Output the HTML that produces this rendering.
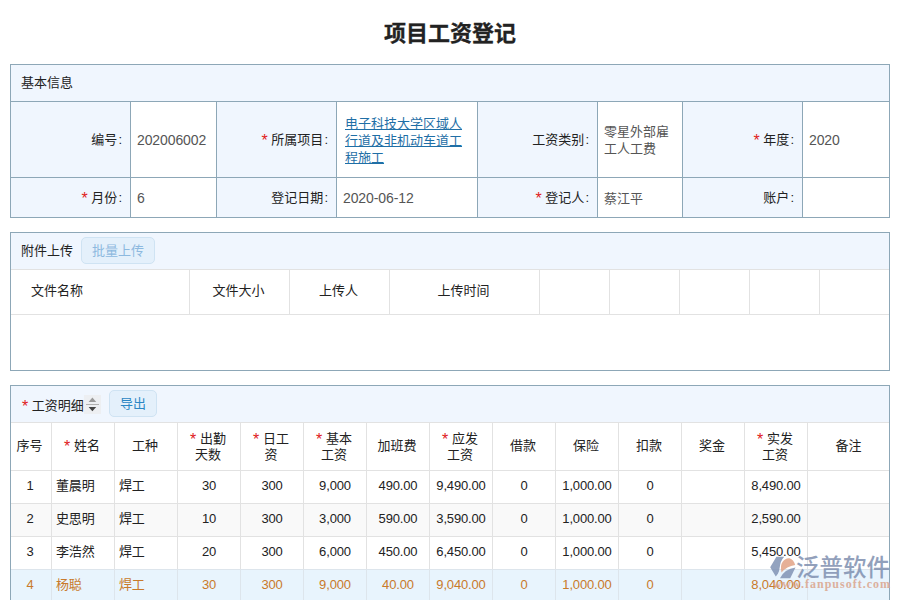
<!DOCTYPE html>
<html lang="zh-CN">
<head>
<meta charset="utf-8">
<title>项目工资登记</title>
<style>
*{box-sizing:border-box;margin:0;padding:0}
html,body{width:900px;height:600px;overflow:hidden;background:#fff}
body{font-family:"Liberation Sans","Noto Sans CJK SC",sans-serif;font-size:13px;color:#333;position:relative}
h1{position:absolute;left:0;top:15.5px;width:900px;text-align:center;font-size:22px;line-height:36px;font-weight:bold;color:#222;-webkit-text-stroke:.3px #222}
.panel{position:absolute;left:10px;width:880px;border:1px solid #8da7b7;background:#fff;overflow:hidden}
.ph{position:absolute;left:0;top:0;width:100%;height:37px;background:#f0f6fe;line-height:36px;padding-left:10px;color:#222}
.req{color:#e02020;font-family:"Liberation Sans",sans-serif;font-size:16px;line-height:10px;vertical-align:-2px}
.c{font-style:normal;margin-left:1px}
.cell{position:absolute;border-left:1px solid #8da7b7;border-top:1px solid #8da7b7;display:flex;align-items:center}
.lab{background:#f0f6fe;justify-content:flex-end;padding:0 8px 3px 0;color:#222}
.val{background:#fff;padding:0 8px 0 6px;color:#555;font-size:14px;letter-spacing:-.1px}
.val.cn{letter-spacing:0;font-size:13px;line-height:17px}
a.lk{margin-left:2px;display:block;white-space:nowrap;color:#1f6fa6;text-decoration:underline;letter-spacing:0;line-height:17px}
.gc{position:absolute;border-left:1px solid #e2e2e2;border-top:1px solid #e2e2e2;display:flex;align-items:center;justify-content:center;text-align:center;line-height:16px;color:#222}
.gc.l{justify-content:flex-start;padding-left:4px;text-align:left}
.gc.d{padding-bottom:3px;letter-spacing:-.15px}
.gc.h1{padding-bottom:2px;padding-right:2px}
.gc.h2{padding-right:2px}
.alt{background:#f9f9f9}
.sel{background:#e8f4fd;color:#c97a2b;border-color:#dde5ec}
.wm{position:absolute;left:0;top:0;width:900px;height:600px;opacity:.85;pointer-events:none}
.wt{position:absolute;left:796px;top:552.5px;font-size:23.5px;font-weight:500;line-height:30px;color:#7f90b0;white-space:nowrap}
.wu{position:absolute;right:9px;top:577px;font-family:"Liberation Serif",serif;font-weight:bold;font-size:12px;line-height:14px;letter-spacing:1px;color:#dba58d;white-space:nowrap}
.btn{position:absolute;border:1px solid #cfe3f3;background:#e4f0fb;border-radius:5px;text-align:center;color:#2b86c4;line-height:25px;height:27px}
</style>
</head>
<body>
<h1>项目工资登记</h1>
<div class="panel" style="top:64px;height:154px">
<div class="ph">基本信息</div>
<div class="cell lab" style="left:-1px;top:36px;width:120px;height:77px"><span>编号<i class="c">:</i></span></div>
<div class="cell val " style="left:119px;top:36px;width:86px;height:77px">202006002</div>
<div class="cell lab" style="left:205px;top:36px;width:120px;height:77px"><span><span class="req">*</span> 所属项目<i class="c">:</i></span></div>
<div class="cell val cn" style="left:325px;top:36px;width:141px;height:77px"><a class="lk">电子科技大学区域人<br>行道及非机动车道工<br>程施工</a></div>
<div class="cell lab" style="left:466px;top:36px;width:120px;height:77px"><span>工资类别<i class="c">:</i></span></div>
<div class="cell val cn" style="left:586px;top:36px;width:85px;height:77px"><span style="white-space:nowrap">零星外部雇<br>工人工费</span></div>
<div class="cell lab" style="left:671px;top:36px;width:120px;height:77px"><span><span class="req">*</span> 年度<i class="c">:</i></span></div>
<div class="cell val " style="left:791px;top:36px;width:87px;height:77px">2020</div>
<div class="cell lab" style="left:-1px;top:112px;width:120px;height:41px"><span><span class="req">*</span> 月份<i class="c">:</i></span></div>
<div class="cell val " style="left:119px;top:112px;width:86px;height:41px">6</div>
<div class="cell lab" style="left:205px;top:112px;width:120px;height:41px"><span>登记日期<i class="c">:</i></span></div>
<div class="cell val " style="left:325px;top:112px;width:141px;height:41px">2020-06-12</div>
<div class="cell lab" style="left:466px;top:112px;width:120px;height:41px"><span><span class="req">*</span> 登记人<i class="c">:</i></span></div>
<div class="cell val cn" style="left:586px;top:112px;width:85px;height:41px">蔡江平</div>
<div class="cell lab" style="left:671px;top:112px;width:120px;height:41px"><span>账户<i class="c">:</i></span></div>
<div class="cell val " style="left:791px;top:112px;width:87px;height:41px"></div>
</div>
<div class="panel" style="top:232px;height:139px">
<div class="ph">附件上传</div>
<div class="btn" style="left:70px;top:4px;width:74px;color:#8db9df">批量上传</div>
<div class="gc l" style="left:-1px;top:36px;width:179px;height:46px;border-bottom:1px solid #e2e2e2;padding-bottom:2px;padding-left:20px">文件名称</div>
<div class="gc" style="left:178px;top:36px;width:100px;height:46px;border-bottom:1px solid #e2e2e2;padding-bottom:2px;padding-right:2px">文件大小</div>
<div class="gc" style="left:278px;top:36px;width:100px;height:46px;border-bottom:1px solid #e2e2e2;padding-bottom:2px;padding-right:2px">上传人</div>
<div class="gc" style="left:378px;top:36px;width:150px;height:46px;border-bottom:1px solid #e2e2e2;padding-bottom:2px;padding-right:2px">上传时间</div>
<div class="gc" style="left:528px;top:36px;width:70px;height:46px;border-bottom:1px solid #e2e2e2;padding-bottom:2px;padding-right:2px"></div>
<div class="gc" style="left:598px;top:36px;width:70px;height:46px;border-bottom:1px solid #e2e2e2;padding-bottom:2px;padding-right:2px"></div>
<div class="gc" style="left:668px;top:36px;width:70px;height:46px;border-bottom:1px solid #e2e2e2;padding-bottom:2px;padding-right:2px"></div>
<div class="gc" style="left:738px;top:36px;width:70px;height:46px;border-bottom:1px solid #e2e2e2;padding-bottom:2px;padding-right:2px"></div>
<div class="gc" style="left:808px;top:36px;width:70px;height:46px;border-bottom:1px solid #e2e2e2;padding-bottom:2px;padding-right:2px"></div>
</div>
<div class="panel" style="top:385px;height:230px">
<div class="ph" style="padding-left:11px;line-height:39px"><span class="req">*</span> 工资明细</div>
<svg style="position:absolute;left:73px;top:9px" width="17" height="19" viewBox="0 0 17 19"><rect width="17" height="19" fill="#edeff2"/><path d="M8.4 2.6 L12.2 7 H4.6 Z" fill="#9a9a9a"/><rect x="2" y="9" width="13" height="1" fill="#b0b0b0"/><path d="M4.6 12 H12.2 L8.4 16.2 Z" fill="#444"/></svg>
<div class="btn" style="left:98px;top:4px;width:48px">导出</div>
<div class="gc h1" style="left:-1px;top:36px;width:41px;height:49px;padding-right:3px">序号</div>
<div class="gc h1" style="left:40px;top:36px;width:63px;height:49px"><span><span class="req">*</span> 姓名</span></div>
<div class="gc h1" style="left:103px;top:36px;width:63px;height:49px">工种</div>
<div class="gc h2" style="left:166px;top:36px;width:63px;height:49px"><span><span class="req">*</span> 出勤<br>天数</span></div>
<div class="gc h2" style="left:229px;top:36px;width:63px;height:49px"><span><span class="req">*</span> 日工<br>资</span></div>
<div class="gc h2" style="left:292px;top:36px;width:63px;height:49px"><span><span class="req">*</span> 基本<br>工资</span></div>
<div class="gc h1" style="left:355px;top:36px;width:63px;height:49px">加班费</div>
<div class="gc h2" style="left:418px;top:36px;width:63px;height:49px"><span><span class="req">*</span> 应发<br>工资</span></div>
<div class="gc h1" style="left:481px;top:36px;width:63px;height:49px">借款</div>
<div class="gc h1" style="left:544px;top:36px;width:63px;height:49px">保险</div>
<div class="gc h1" style="left:607px;top:36px;width:63px;height:49px">扣款</div>
<div class="gc h1" style="left:670px;top:36px;width:63px;height:49px">奖金</div>
<div class="gc h2" style="left:733px;top:36px;width:63px;height:49px"><span><span class="req">*</span> 实发<br>工资</span></div>
<div class="gc h1" style="left:796px;top:36px;width:82px;height:49px;padding-right:0">备注</div>
<div class="gc d" style="left:-1px;top:84px;width:41px;height:34px;padding-right:2px">1</div>
<div class="gc d l" style="left:40px;top:84px;width:63px;height:34px">董晨明</div>
<div class="gc d l" style="left:103px;top:84px;width:63px;height:34px">焊工</div>
<div class="gc d" style="left:166px;top:84px;width:63px;height:34px">30</div>
<div class="gc d" style="left:229px;top:84px;width:63px;height:34px">300</div>
<div class="gc d" style="left:292px;top:84px;width:63px;height:34px">9,000</div>
<div class="gc d" style="left:355px;top:84px;width:63px;height:34px">490.00</div>
<div class="gc d" style="left:418px;top:84px;width:63px;height:34px">9,490.00</div>
<div class="gc d" style="left:481px;top:84px;width:63px;height:34px">0</div>
<div class="gc d" style="left:544px;top:84px;width:63px;height:34px">1,000.00</div>
<div class="gc d" style="left:607px;top:84px;width:63px;height:34px">0</div>
<div class="gc d" style="left:670px;top:84px;width:63px;height:34px"></div>
<div class="gc d" style="left:733px;top:84px;width:63px;height:34px">8,490.00</div>
<div class="gc d" style="left:796px;top:84px;width:82px;height:34px"></div>
<div class="gc d alt" style="left:-1px;top:117px;width:41px;height:34px;padding-right:2px">2</div>
<div class="gc d l alt" style="left:40px;top:117px;width:63px;height:34px">史思明</div>
<div class="gc d l alt" style="left:103px;top:117px;width:63px;height:34px">焊工</div>
<div class="gc d alt" style="left:166px;top:117px;width:63px;height:34px">10</div>
<div class="gc d alt" style="left:229px;top:117px;width:63px;height:34px">300</div>
<div class="gc d alt" style="left:292px;top:117px;width:63px;height:34px">3,000</div>
<div class="gc d alt" style="left:355px;top:117px;width:63px;height:34px">590.00</div>
<div class="gc d alt" style="left:418px;top:117px;width:63px;height:34px">3,590.00</div>
<div class="gc d alt" style="left:481px;top:117px;width:63px;height:34px">0</div>
<div class="gc d alt" style="left:544px;top:117px;width:63px;height:34px">1,000.00</div>
<div class="gc d alt" style="left:607px;top:117px;width:63px;height:34px">0</div>
<div class="gc d alt" style="left:670px;top:117px;width:63px;height:34px"></div>
<div class="gc d alt" style="left:733px;top:117px;width:63px;height:34px">2,590.00</div>
<div class="gc d alt" style="left:796px;top:117px;width:82px;height:34px"></div>
<div class="gc d" style="left:-1px;top:150px;width:41px;height:34px;padding-right:2px">3</div>
<div class="gc d l" style="left:40px;top:150px;width:63px;height:34px">李浩然</div>
<div class="gc d l" style="left:103px;top:150px;width:63px;height:34px">焊工</div>
<div class="gc d" style="left:166px;top:150px;width:63px;height:34px">20</div>
<div class="gc d" style="left:229px;top:150px;width:63px;height:34px">300</div>
<div class="gc d" style="left:292px;top:150px;width:63px;height:34px">6,000</div>
<div class="gc d" style="left:355px;top:150px;width:63px;height:34px">450.00</div>
<div class="gc d" style="left:418px;top:150px;width:63px;height:34px">6,450.00</div>
<div class="gc d" style="left:481px;top:150px;width:63px;height:34px">0</div>
<div class="gc d" style="left:544px;top:150px;width:63px;height:34px">1,000.00</div>
<div class="gc d" style="left:607px;top:150px;width:63px;height:34px">0</div>
<div class="gc d" style="left:670px;top:150px;width:63px;height:34px"></div>
<div class="gc d" style="left:733px;top:150px;width:63px;height:34px">5,450.00</div>
<div class="gc d" style="left:796px;top:150px;width:82px;height:34px"></div>
<div class="gc d sel" style="left:-1px;top:183px;width:41px;height:34px;padding-right:2px">4</div>
<div class="gc d l sel" style="left:40px;top:183px;width:63px;height:34px">杨聪</div>
<div class="gc d l sel" style="left:103px;top:183px;width:63px;height:34px">焊工</div>
<div class="gc d sel" style="left:166px;top:183px;width:63px;height:34px">30</div>
<div class="gc d sel" style="left:229px;top:183px;width:63px;height:34px">300</div>
<div class="gc d sel" style="left:292px;top:183px;width:63px;height:34px">9,000</div>
<div class="gc d sel" style="left:355px;top:183px;width:63px;height:34px">40.00</div>
<div class="gc d sel" style="left:418px;top:183px;width:63px;height:34px">9,040.00</div>
<div class="gc d sel" style="left:481px;top:183px;width:63px;height:34px">0</div>
<div class="gc d sel" style="left:544px;top:183px;width:63px;height:34px">1,000.00</div>
<div class="gc d sel" style="left:607px;top:183px;width:63px;height:34px">0</div>
<div class="gc d sel" style="left:670px;top:183px;width:63px;height:34px"></div>
<div class="gc d sel" style="left:733px;top:183px;width:63px;height:34px">8,040.00</div>
<div class="gc d sel" style="left:796px;top:183px;width:82px;height:34px"></div>
</div>
<div class="wm">
<svg style="position:absolute;left:768px;top:554px" width="32" height="28" viewBox="0 0 32 28"><path d="M2.2 13.2 L8.4 2.7 H16.2 Q12.2 7 11.7 13.5 Q11.2 17.5 9.9 19.8 L7.8 22.5 Z" fill="#8193b5"/><path d="M13.5 18.6 Q11.9 11 14.7 7.7 Q17.5 3.7 21.5 4.2 Q25.6 5.5 27.2 11 Q18.6 12.2 13.5 18.6 Z" fill="#e2a385"/><path d="M12 24.3 Q16.6 15 27.5 13.6 L22.2 24.3 Z" fill="#8193b5"/></svg>
<div class="wt">泛普软件</div>
<div class="wu">www.fanpusoft.com</div>
</div>
</body>
</html>
